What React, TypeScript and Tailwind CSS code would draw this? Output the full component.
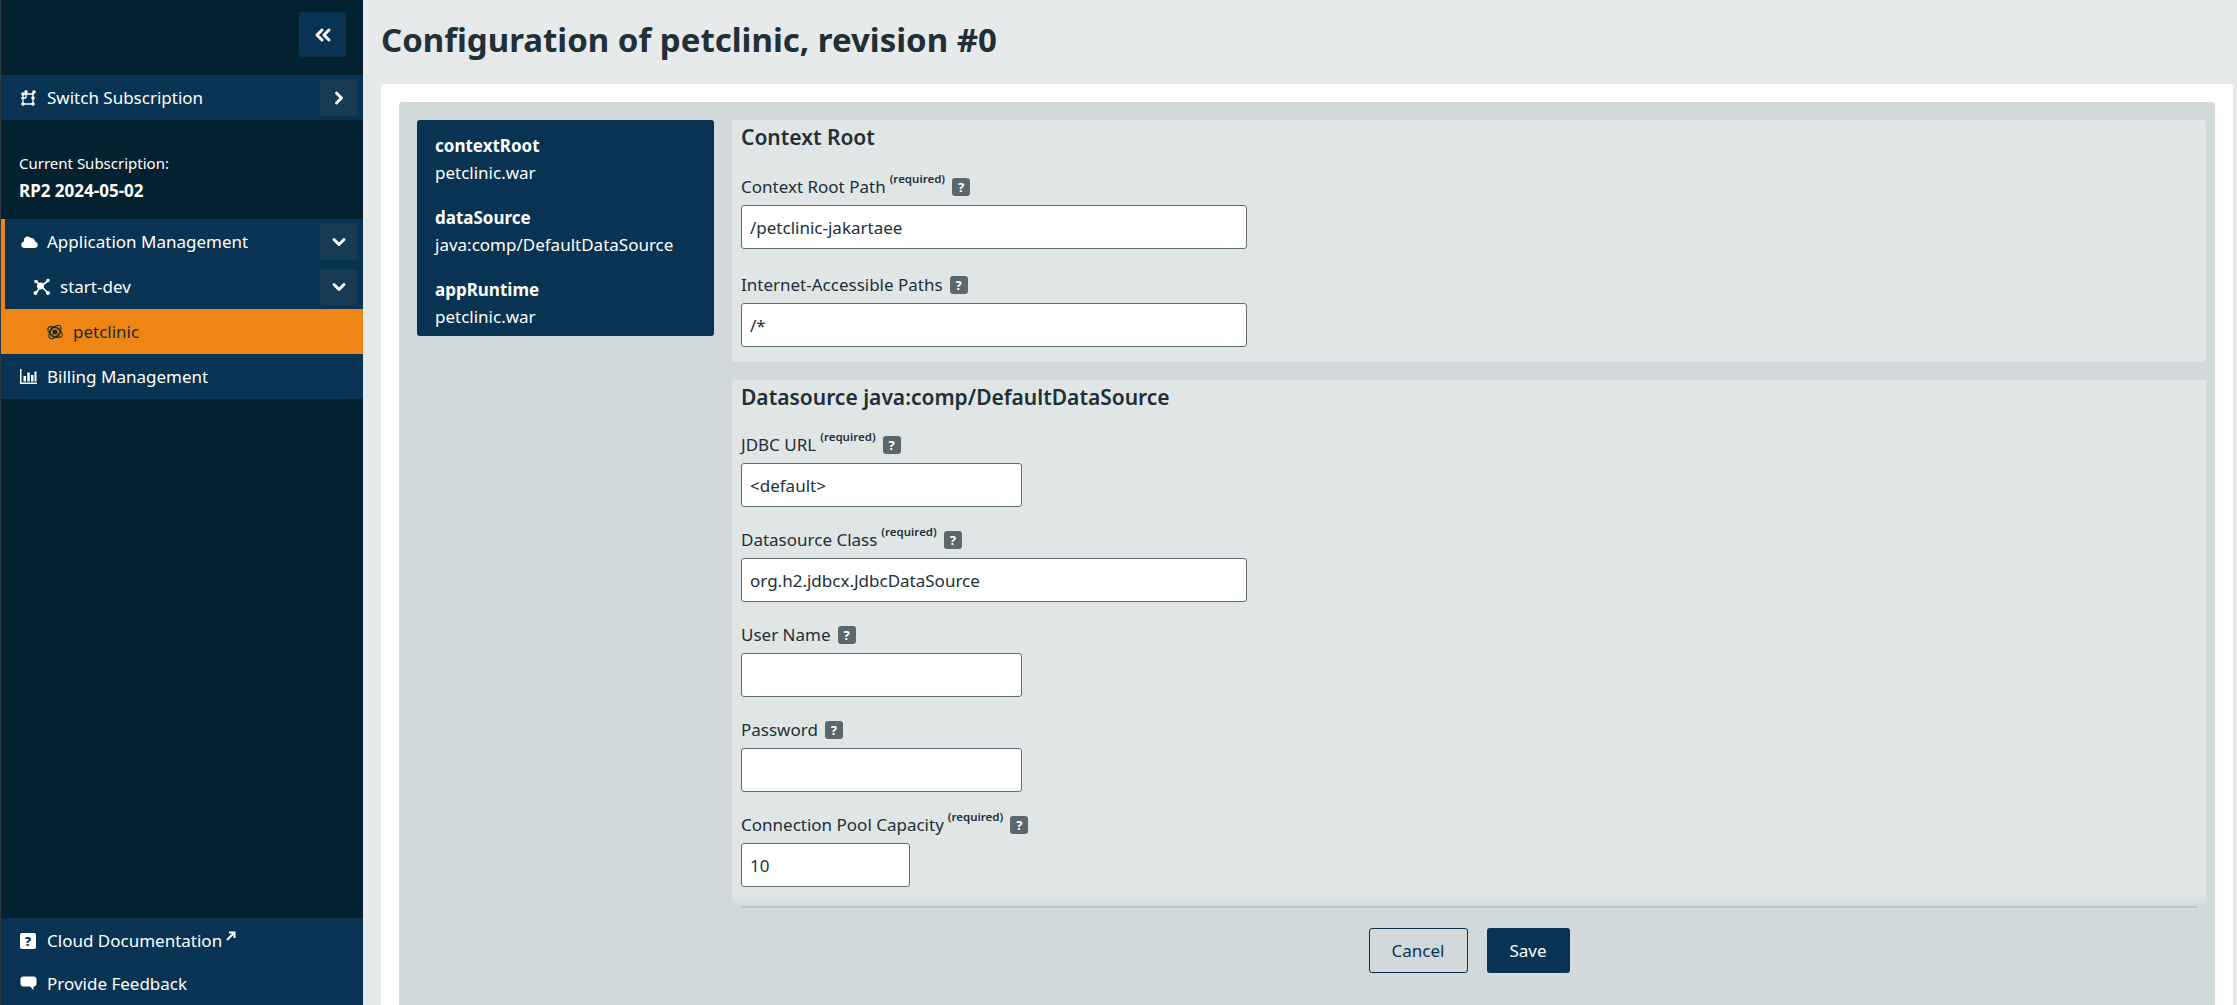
import { ChevronDown, ChevronRight, ChevronsLeft } from 'lucide-react';
import type { ReactNode } from 'react';

const SwitchIcon = () => (
  <svg width="18" height="18" viewBox="0 0 18 18" className="text-white" fill="none" stroke="currentColor" strokeWidth="1.3">
    <path d="M3 5h11M3 5v10M3 15h10M13 15V3M6 1v8M6 9H1" />
    {[[3, 5], [3, 15], [13, 15], [14, 3], [13, 9], [6, 3]].map(([cx, cy]) => (
      <circle key={`${cx}-${cy}`} cx={cx} cy={cy} r="1.8" fill="currentColor" stroke="none" />
    ))}
  </svg>
);

const CloudIcon = () => (
  <svg width="18" height="12" viewBox="0 0 18 12" fill="currentColor">
    <path d="M4 12h10.5a3.2 3.2 0 0 0 .8-6.3A4.6 4.6 0 0 0 11 2 5 5 0 0 0 6.500 0.500 4.600 4.600 0 0 0 4 5.500 3.300 3.300 0 0 0 4 12z" />
  </svg>
);

const ClusterIcon = () => (
  <svg width="18" height="18" viewBox="0 0 18 18" fill="currentColor" stroke="currentColor">
    <path d="M8 8L3 3M8 8L15 3M8 8L3 15M8 8L15 15" strokeWidth="1.6" />
    <circle cx="7.500" cy="8" r="3.500" stroke="none" />
    <circle cx="3" cy="3.500" r="1.800" stroke="none" />
    <circle cx="15" cy="2.500" r="1.800" stroke="none" />
    <circle cx="2.500" cy="15" r="2" stroke="none" />
    <circle cx="15" cy="15" r="2" stroke="none" />
  </svg>
);

const AtomIcon = () => (
  <svg width="18" height="18" viewBox="0 0 18 18" fill="none" stroke="#1a2a30" strokeWidth="1.1">
    <circle cx="9" cy="9" r="2.600" fill="#1a2a30" stroke="none" />
    <ellipse cx="9" cy="9" rx="8" ry="4.200" transform="rotate(30 9 9)" />
    <ellipse cx="9" cy="9" rx="8" ry="4.200" transform="rotate(-50 9 9)" />
    <circle cx="9" cy="9" r="5.200" />
  </svg>
);

const BarsIcon = () => (
  <svg width="17" height="15" viewBox="0 0 17 15" fill="currentColor">
    <path d="M0 0h1.500v13.500H17V15H0z" />
    <path d="M3.500 7h2.500v5.500H3.500zM7.300 3.500h2.500v9H7.300zM11 6h2.500v6.500H11zM14.500 2.500H16.500v10h-2z" />
  </svg>
);

const DocIcon = () => (
  <svg width="16" height="16" viewBox="0 0 16 16">
    <rect width="16" height="16" rx="2" fill="currentColor" />
    <text x="8" y="13" textAnchor="middle" fontSize="13" fontWeight="800" fill="#083352" fontFamily="'Noto Sans', sans-serif">?</text>
  </svg>
);

const ChatIcon = () => (
  <svg width="17" height="15" viewBox="0 0 17 15" fill="currentColor">
    <path d="M3.500 0.500h10A3 3 0 0 1 16.500 3.500v4a3 3 0 0 1-3 3v3.500l-3.500-3.500H3.500A3 3 0 0 1 0.500 7.500v-4a3 3 0 0 1 3-3z" />
  </svg>
);

const ExternalIcon = () => (
  <svg width="10" height="10" viewBox="0 0 10 10" fill="none" stroke="currentColor" strokeWidth="2" className="ml-[4px] mb-[9px]">
    <path d="M1 9L8 2M3 1.500h5.500V7" />
  </svg>
);

const Help = () => (
  <span className="ml-[7px] inline-flex h-[18px] w-[18px] items-center justify-center rounded-[3px] bg-[#5a686e] text-[13px] leading-none font-bold text-white">?</span>
);

function SideRow({ icon, label, toggle, indent = 'pl-[19px]', barred }: { icon: ReactNode; label: string; toggle?: ReactNode; indent?: string; barred?: boolean }) {
  return (
    <div className={`flex h-[45px] items-center bg-[#083352] text-white ${barred ? 'border-l-4 border-[#ee8514]' : ''}`}>
      <div className={`flex flex-1 items-center ${indent}`}>
        <span className="flex w-[27px] shrink-0 items-center">{icon}</span>
        <span>{label}</span>
      </div>
      {toggle && (
        <span className="mr-[5px] flex h-[36px] w-[38px] items-center justify-center rounded-[3px] bg-[#173a55]">{toggle}</span>
      )}
    </div>
  );
}

function Field({ label, required, value = '', width, className = 'mt-[22px]' }: { label: string; required?: boolean; value?: string; width: string; className?: string }) {
  return (
    <div className={className}>
      <div className="flex h-[28px] items-center text-[#212f37]">
        <span>{label}</span>
        {required && <sup className="ml-[4px] -translate-y-[2px] text-[11.500px] font-semibold">(required)</sup>}
        <Help />
      </div>
      <input
        readOnly
        value={value}
        className={`mt-[4px] block h-[44px] rounded-[3px] border border-[#5f6d73] bg-white px-[8px] text-[#212f37] ${width}`}
      />
    </div>
  );
}

export default function App() {
  return (
    <div className="flex h-screen overflow-hidden bg-[#e6eaea] font-['Noto_Sans',sans-serif] text-[17px]">
      {/* Sidebar */}
      <aside className="flex w-[363px] shrink-0 flex-col border-l border-[#2c3a40] bg-[#03212e]">
        <div className="flex h-[75px] justify-end pt-[12px] pr-[17px]">
          <button className="flex h-[45px] w-[47px] items-center justify-center rounded-[3px] bg-[#083352] text-white">
            <ChevronsLeft size={24} strokeWidth={3} />
          </button>
        </div>
        <SideRow icon={<SwitchIcon />} label="Switch Subscription" toggle={<ChevronRight size={20} strokeWidth={3.5} />} />
        <div className="h-[99px] pt-[33px] pl-[18px] text-white">
          <div className="text-[15px] leading-[20px]">Current Subscription:</div>
          <div className="mt-[6px] text-[17px] leading-[24px] font-bold">RP2 2024-05-02</div>
        </div>
        <SideRow barred icon={<CloudIcon />} label="Application Management" toggle={<ChevronDown size={20} strokeWidth={3.500} />} indent="pl-[15px]" />
        <SideRow barred icon={<ClusterIcon />} label="start-dev" toggle={<ChevronDown size={20} strokeWidth={3.500} />} indent="pl-[28px]" />
        <div className="flex h-[45px] items-center bg-[#ee8514] pl-[45px] text-[#1a2a30]">
          <span className="flex w-[27px] shrink-0 items-center"><AtomIcon /></span>
          <span>petclinic</span>
        </div>
        <SideRow icon={<BarsIcon />} label="Billing Management" />
        <div className="mt-auto bg-[#083352] pb-[1px]">
          <div className="flex h-[45px] items-center pl-[19px] text-white">
            <span className="flex w-[27px] shrink-0 items-center"><DocIcon /></span>
            <span>Cloud Documentation</span>
            <ExternalIcon />
          </div>
          <div className="flex h-[41px] items-center pl-[19px] text-white">
            <span className="flex w-[27px] shrink-0 items-center"><ChatIcon /></span>
            <span>Provide Feedback</span>
          </div>
        </div>
      </aside>

      {/* Main Content */}
      <main className="flex min-w-0 flex-1 flex-col pr-[4px] pl-[18px]">
        <h1 className="flex h-[84px] items-center pb-[4px] text-[33px] font-bold text-[#212f37]">Configuration of petclinic, revision #0</h1>
        <div className="flex-1 rounded-t-[3px] bg-white px-[18px] pt-[18px]">
          <div className="flex h-full gap-[18px] rounded-t-[3px] bg-[#d1d9db] pt-[18px] pr-[9px] pl-[18px]">
            <div className="h-[216px] w-[297px] shrink-0 rounded-[3px] bg-[#083352] px-[18px] pt-[12px] text-white">
              {[['contextRoot', 'petclinic.war'], ['dataSource', 'java:comp/DefaultDataSource'], ['appRuntime', 'petclinic.war']].map(([k, v]) => (
                <div key={k} className="mb-[18px] leading-[27px]">
                  <div className="font-bold">{k}</div>
                  <div>{v}</div>
                </div>
              ))}
            </div>
            <div className="min-w-0 flex-1">
              <section className="h-[242px] rounded-[3px] bg-[#e0e6e6] px-[9px] pt-[3px]">
                <h2 className="text-[21px] leading-[28px] font-semibold text-[#212f37]">Context Root</h2>
                <Field label="Context Root Path" required value="/petclinic-jakartaee" width="w-[506px]" className="mt-[22px]" />
                <Field label="Internet-Accessible Paths" value="/*" width="w-[506px]" className="mt-[22px]" />
              </section>
              <section className="mt-[18px] h-[526px] rounded-t-[3px] bg-gradient-to-b from-[#e0e6e6] from-[98%] to-[#d1d9db] px-[9px] pt-[3px]">
                <h2 className="text-[21px] leading-[28px] font-semibold text-[#212f37]">Datasource java:comp/DefaultDataSource</h2>
                <Field label="JDBC URL" required value="<default>" width="w-[281px]" className="mt-[20px]" />
                <Field label="Datasource Class" required value="org.h2.jdbcx.JdbcDataSource" width="w-[506px]" className="mt-[19px]" />
                <Field label="User Name" width="w-[281px]" className="mt-[19px]" />
                <Field label="Password" width="w-[281px]" className="mt-[19px]" />
                <Field label="Connection Pool Capacity" required value="10" width="w-[169px]" className="mt-[19px]" />
              </section>
              <div className="mx-[9px] border-t-2 border-[#bcc6c8]" />
              <div className="flex justify-center gap-[19px] pt-[20px]">
                <button className="h-[45px] w-[99px] rounded-[3px] border border-[#083352] text-[#083352]">Cancel</button>
                <button className="h-[45px] w-[83px] rounded-[3px] bg-[#083352] text-white">Save</button>
              </div>
            </div>
          </div>
        </div>
      </main>
    </div>
  );
}
